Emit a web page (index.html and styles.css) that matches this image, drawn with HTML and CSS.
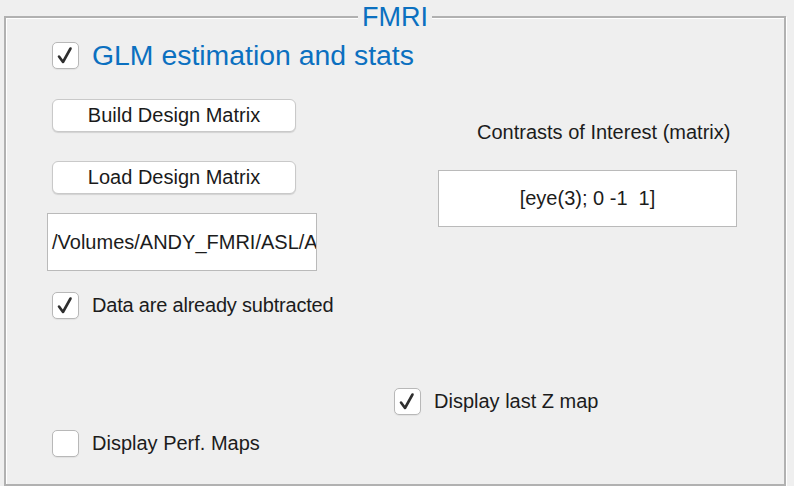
FILE: index.html
```html
<!DOCTYPE html>
<html>
<head>
<meta charset="utf-8">
<link rel="stylesheet" href="styles.css">
</head>
<body>
<fieldset class="panel">
  <legend class="panel-title">FMRI</legend>
  <div class="content">
    <label class="check head">
      <span class="box"><svg viewBox="0 0 27 27" width="27" height="27"><path d="M7 14.5 L11 20 L18.5 6.5" fill="none" stroke="#2e2e2e" stroke-width="2.6" stroke-linecap="round" stroke-linejoin="round"/></svg></span>
      <span class="head-text">GLM estimation and stats</span>
    </label>
    <div class="columns">
      <div class="left">
        <button class="btn">Build Design Matrix</button>
        <button class="btn second">Load Design Matrix</button>
        <div class="field path">/Volumes/ANDY_FMRI/ASL/A</div>
        <label class="check data">
          <span class="box"><svg viewBox="0 0 27 27" width="27" height="27"><path d="M7 14.5 L11 20 L18.5 6.5" fill="none" stroke="#2e2e2e" stroke-width="2.6" stroke-linecap="round" stroke-linejoin="round"/></svg></span>
          <span class="narrow">Data are already subtracted</span>
        </label>
      </div>
      <div class="right">
        <div class="caption">Contrasts of Interest (matrix)</div>
        <div class="field contrast">[eye(3); 0 -1&nbsp; 1]</div>
      </div>
    </div>
    <label class="check zmap">
      <span class="box"><svg viewBox="0 0 27 27" width="27" height="27"><path d="M7 14.5 L11 20 L18.5 6.5" fill="none" stroke="#2e2e2e" stroke-width="2.6" stroke-linecap="round" stroke-linejoin="round"/></svg></span>
      <span>Display last Z map</span>
    </label>
    <label class="check perf">
      <span class="box"></span>
      <span>Display Perf. Maps</span>
    </label>
  </div>
</fieldset>
</body>
</html>
```
FILE: styles.css
```css
html, body {
  margin: 0;
  padding: 0;
  background: #efefef;
  overflow: hidden;
}
body {
  font-family: "Liberation Sans", Arial, sans-serif;
  font-size: 20px;
  color: #1c1c1c;
  width: 794px;
  height: 486px;
}
.panel {
  box-sizing: border-box;
  margin: 3px 0 0 4px;
  padding: 0;
  width: 782px;
  min-width: 0;
  border: 2px solid #b1b1b1;
  box-shadow: inset 1px 1px 0 #ffffff, 1px 1px 0 #ffffff;
}
.panel-title {
  margin-left: auto;
  margin-right: auto;
  padding: 0 4px;
  font-size: 27px;
  line-height: 28px;
  color: #0b70c0;
  background: #efefef;
}
.content {
  box-sizing: border-box;
  height: 453px;
  padding: 11px 0 0 41px;
  display: flex;
  flex-direction: column;
  align-items: flex-start;
}
.check {
  display: flex;
  align-items: center;
  gap: 13px;
  height: 27px;
  margin-left: 5px;
  white-space: nowrap;
}
.box {
  box-sizing: border-box;
  width: 27px;
  height: 27px;
  border: 1px solid #b8b8b8;
  border-radius: 5px;
  background: #ffffff;
  box-shadow: 0 1px 1px rgba(0,0,0,0.06);
  display: flex;
  align-items: center;
  justify-content: center;
  flex: none;
}
.box svg {
  display: block;
  margin: -1px;
}
.head .head-text {
  font-size: 28.4px;
  color: #0b70c0;
}
.narrow {
  letter-spacing: -0.2px;
}
.columns {
  display: flex;
  align-items: flex-start;
  margin-top: 30px;
}
.left {
  display: flex;
  flex-direction: column;
  align-items: flex-start;
  width: 270px;
}
.btn {
  box-sizing: border-box;
  width: 244px;
  height: 33px;
  margin-left: 5px;
  padding: 0;
  font-family: inherit;
  font-size: 20px;
  color: #1a1a1a;
  background: #ffffff;
  border: 1px solid #c9c9c9;
  border-radius: 6px;
  box-shadow: 0 1px 1px rgba(0,0,0,0.12);
}
.btn.second {
  margin-top: 29px;
}
.field {
  box-sizing: border-box;
  background: #ffffff;
  border: 1px solid #bababa;
  white-space: nowrap;
  overflow: hidden;
  display: flex;
  align-items: center;
}
.path {
  width: 270px;
  height: 58px;
  margin-top: 19px;
  padding-left: 4px;
}
.check.data {
  margin-top: 21px;
}
.right {
  margin-left: 121px;
  display: flex;
  flex-direction: column;
  align-items: flex-start;
  padding-top: 22px;
}
.caption {
  line-height: 23px;
  margin-left: 39px;
}
.contrast {
  width: 299px;
  height: 57px;
  margin-top: 26px;
  justify-content: center;
}
.check.zmap {
  margin-top: 69px;
  margin-left: 347px;
}
.check.perf {
  margin-top: 15px;
}
```
